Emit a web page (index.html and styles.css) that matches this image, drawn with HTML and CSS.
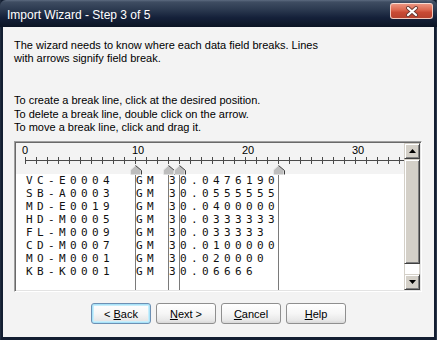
FILE: index.html
```html
<!DOCTYPE html>
<html>
<head>
<meta charset="utf-8">
<title>Import Wizard</title>
<link rel="stylesheet" href="styles.css">
</head>
<body>
<div class="window">
  <div class="titlebar">
    <span class="title">Import Wizard - Step 3 of 5</span>
    <span class="close">
      <svg width="14" height="11" viewBox="0 0 14 11">
        <path d="M3 2 L11 9 M11 2 L3 9" stroke="#6b3b34" stroke-width="4" stroke-linecap="round"/>
        <path d="M3 2 L11 9 M11 2 L3 9" stroke="#ffffff" stroke-width="2.2" stroke-linecap="round"/>
      </svg>
    </span>
  </div>
  <div class="client">
    <p class="intro">The wizard needs to know where each data field breaks. Lines<br>with arrows signify field break.</p>
    <p class="howto">To create a break line, click at the desired position.<br>To delete a break line, double click on the arrow.<br>To move a break line, click and drag it.</p>
    <div class="panel">
      <div class="view">
        <div class="ruler">
          <div class="labels"><span>0</span><span>10</span><span>20</span><span>30</span></div>
          <div class="scale"></div>
        </div>
        <div class="data">VC-E0004  GM 30.0476190
SB-A0003  GM 30.0555555
MD-E0019  GM 30.0400000
HD-M0005  GM 30.0333333
FL-M0009  GM 30.033333
CD-M0007  GM 30.0100000
MO-M0001  GM 30.020000
KB-K0001  GM 30.06666</div>
        <div class="break" style="left:114px"><svg class="marker" width="12" height="10" viewBox="0 0 12 10"><polygon points="5.5,0.5 10.5,5 10.5,9.5 0.5,9.5 0.5,5" class="mk"/><polyline points="0.5,9 0.5,5 5.5,0.5" class="mkl"/><polyline points="5.5,0.5 11.5,5.5 11.5,9.5" class="mkd"/></svg></div>
        <div class="break" style="left:147px"><svg class="marker" width="12" height="10" viewBox="0 0 12 10"><polygon points="5.5,0.5 10.5,5 10.5,9.5 0.5,9.5 0.5,5" class="mk"/><polyline points="0.5,9 0.5,5 5.5,0.5" class="mkl"/><polyline points="5.5,0.5 11.5,5.5 11.5,9.5" class="mkd"/></svg></div>
        <div class="break" style="left:158px"><svg class="marker" width="12" height="10" viewBox="0 0 12 10"><polygon points="5.5,0.5 10.5,5 10.5,9.5 0.5,9.5 0.5,5" class="mk"/><polyline points="0.5,9 0.5,5 5.5,0.5" class="mkl"/><polyline points="5.5,0.5 11.5,5.5 11.5,9.5" class="mkd"/></svg></div>
        <div class="break" style="left:257px"><svg class="marker" width="12" height="10" viewBox="0 0 12 10"><polygon points="5.5,0.5 10.5,5 10.5,9.5 0.5,9.5 0.5,5" class="mk"/><polyline points="0.5,9 0.5,5 5.5,0.5" class="mkl"/><polyline points="5.5,0.5 11.5,5.5 11.5,9.5" class="mkd"/></svg></div>
      </div>
      <div class="scrollbar">
        <div class="sb-btn"><svg width="7" height="4" viewBox="0 0 7 4"><polygon points="0,4 3.5,0 7,4" fill="#000"/></svg></div>
        <div class="sb-thumb"></div>
        <div class="sb-track"></div>
        <div class="sb-btn"><svg width="7" height="4" viewBox="0 0 7 4"><polygon points="0,0 7,0 3.5,4" fill="#000"/></svg></div>
      </div>
    </div>
    <div class="buttons">
      <button class="btn default">&lt; <u>B</u>ack</button>
      <button class="btn"><u>N</u>ext &gt;</button>
      <button class="btn"><u>C</u>ancel</button>
      <button class="btn"><u>H</u>elp</button>
    </div>
  </div>
</div>
</body>
</html>
```
FILE: styles.css
```css
html, body {
  margin: 0;
  padding: 0;
  background: #0e1828;
}
body {
  font-family: "Liberation Sans", Arial, sans-serif;
  font-size: 11px;
  color: #000;
}
.window {
  width: 437px;
  height: 340px;
  display: flex;
  flex-direction: column;
  background: linear-gradient(to right, #2a3649 0, #131e31 1px, #131e31 436px, #2a3649 436px);
}
.titlebar {
  height: 27px;
  flex: none;
  display: flex;
  align-items: flex-start;
  justify-content: space-between;
  background: linear-gradient(to bottom, #5d6b80 0, #3f4d62 2px, #2c3a50 35%, #15213a 65%, #0b1424 100%);
  border-radius: 6px 6px 0 0;
}
.title {
  color: #fff;
  font-size: 12px;
  line-height: 14px;
  padding: 8px 0 0 7px;
}
.close {
  margin: 3px 4px 0 0;
  width: 43px;
  height: 16px;
  box-sizing: border-box;
  border: 1px solid #f2c8bc;
  border-top-color: #f8dcd4;
  border-radius: 3px;
  background: linear-gradient(to bottom, #ec9480 0, #dc6a52 40%, #c84a34 60%, #b7422e 100%);
  display: flex;
  align-items: center;
  justify-content: center;
}
.client {
  flex: 1;
  margin: 0 3px 3px 3px;
  background: #f3f3f3;
  padding: 12px 11px 0 11px;
}
.intro {
  margin: 0;
  line-height: 13px;
}
.howto {
  margin: 29px 0 0 0;
  line-height: 13.5px;
}
.panel {
  margin-top: 6.5px;
  width: 408px;
  height: 151px;
  box-sizing: border-box;
  border: 1px solid;
  border-color: #a0a0a0 #ffffff #ffffff #a0a0a0;
  box-shadow: inset 1px 1px 0 #696969, inset -1px -1px 0 #e3e3e3;
  padding: 1px;
  display: flex;
}
.view {
  flex: 1;
  position: relative;
  display: flex;
  flex-direction: column;
  overflow: hidden;
}
.ruler {
  height: 31px;
  flex: none;
  box-sizing: border-box;
  padding-top: 1px;
  background: #f3f3f3;
}
.labels {
  padding-left: 6px;
  line-height: 12px;
  white-space: nowrap;
}
.labels span {
  display: inline-block;
  width: 110px;
}
.scale {
  margin: 1px 0 0 9px;
  height: 7px;
  background-image:
    linear-gradient(#4a4a4a, #4a4a4a),
    repeating-linear-gradient(to right, #4a4a4a 0, #4a4a4a 1px, transparent 1px, transparent 11px);
  background-size: 100% 1px, 100% 7px;
  background-position: 0 3px, 0 0;
  background-repeat: no-repeat;
}
.data {
  flex: 1;
  background: #fff;
  margin: 0;
  padding-left: 10px;
  font-family: "DejaVu Sans Mono", "Liberation Mono", monospace;
  font-size: 11px;
  line-height: 13px;
  letter-spacing: 4.38px;
  white-space: pre;
  color: #111;
}
.break {
  position: absolute;
  top: 22px;
  bottom: 0;
  width: 12px;
}
.break::after {
  content: "";
  position: absolute;
  left: 5px;
  top: 10px;
  bottom: 0;
  width: 1px;
  background: #7a7a7a;
}
.marker {
  display: block;
}
.mk {
  fill: #bdbdbd;
  stroke: none;
}
.mkl {
  fill: none;
  stroke: #e6e6e6;
  stroke-width: 1;
}
.mkd {
  fill: none;
  stroke: #3c3c3c;
  stroke-width: 1;
}
.scrollbar {
  width: 16px;
  flex: none;
  display: flex;
  flex-direction: column;
}
.sb-btn, .sb-thumb {
  box-sizing: border-box;
  background: #d4d0c8;
  border: 1px solid;
  border-color: #d4d0c8 #404040 #404040 #d4d0c8;
  box-shadow: inset 1px 1px 0 #ffffff, inset -1px -1px 0 #808080;
}
.sb-btn {
  height: 16px;
  flex: none;
  display: flex;
  align-items: center;
  justify-content: center;
}
.sb-btn svg {
  display: block;
}
.sb-thumb {
  height: 105px;
  flex: none;
}
.sb-track {
  flex: 1;
  background: #ffffff;
  border-left: 1px solid #d4d0c8;
  border-right: 1px solid #d4d0c8;
}
.buttons {
  margin-top: 11px;
  display: flex;
  justify-content: center;
  gap: 5px;
}
.btn {
  width: 60px;
  height: 21px;
  box-sizing: border-box;
  padding: 0;
  font-family: "Liberation Sans", Arial, sans-serif;
  font-size: 11px;
  color: #000;
  border: 1px solid #8f8f8f;
  border-radius: 3px;
  background: linear-gradient(to bottom, #ffffff 0, #f6f6f6 50%, #e8e8e8 85%, #d8d8d8 100%);
}
.btn.default {
  border-color: #6c90b4;
  box-shadow: inset 0 0 0 1px #a8e2f8, inset 0 0 0 2px #c8eefc;
}
.btn u {
  text-decoration: underline;
}
```
